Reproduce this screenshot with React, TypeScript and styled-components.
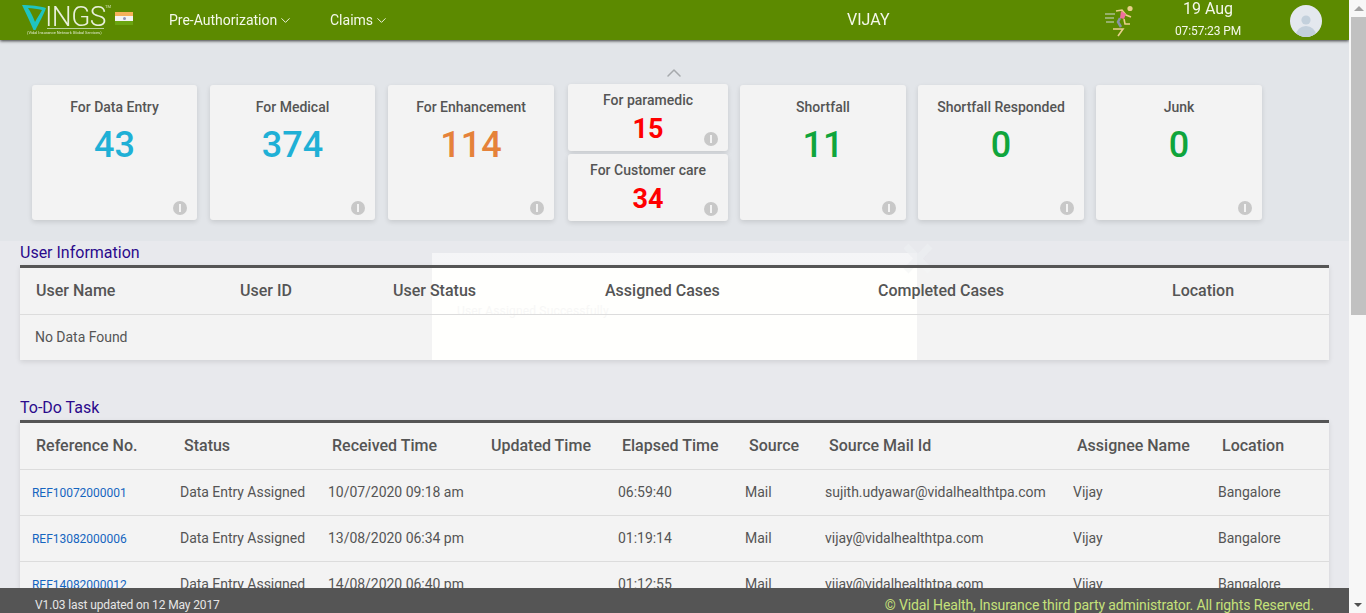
import React from "react";
import styled, { createGlobalStyle } from "styled-components";
import { ChevronDown, ChevronUp } from "lucide-react";

const Global = createGlobalStyle`
  html, body { margin: 0; padding: 0; height: 100%; overflow: hidden; background: #e8e9ed; font-family: Roboto, "Liberation Sans", sans-serif; color: #555; }
`;

const Shell = styled.div`
  position: relative;
  display: flex;
  height: 100vh;
`;

const Main = styled.main`
  flex: 1;
  min-width: 0;
  overflow-y: auto;
  scrollbar-width: none;
`;

const Page = styled.div`
  position: relative;
  padding-bottom: 40px;
`;

const Rail = styled.div`
  flex: none;
  width: 17px;
  background: #f7f7f7;
  display: flex;
  flex-direction: column;
`;

const RailButton = styled.div`
  height: 17px;
  flex: none;
  display: flex;
  align-items: center;
  justify-content: center;
`;

const RailUp = styled.span`
  border-left: 5px solid transparent;
  border-right: 5px solid transparent;
  border-bottom: 5px solid #a3a3a3;
  margin-left: 2px;
`;

const RailDown = styled.span`
  border-left: 4px solid transparent;
  border-right: 4px solid transparent;
  border-top: 4px solid #505050;
`;

const RailTrack = styled.div`
  flex: 1;
  padding-left: 2px;
`;

const RailThumb = styled.div`
  height: 298px;
  background: #c1c1c1;
`;

const Header = styled.header`
  position: sticky;
  top: 0;
  z-index: 5;
  height: 40px;
  background: #5c8a00;
  box-shadow: 0 1px 3px rgba(0, 0, 0, 0.75);
  display: flex;
  align-items: center;
  color: #f4f8ea;
`;

const LogoBox = styled.div`
  position: relative;
  width: 115px;
  height: 40px;
  flex: none;
`;

const LogoMark = styled.svg`
  position: absolute;
  left: 22px;
  top: 5px;
`;

const LogoWord = styled.span`
  position: absolute;
  left: 45px;
  top: 5px;
  font-size: 28px;
  font-weight: 300;
  line-height: 24px;
  letter-spacing: -0.6px;
  color: #e9f0dc;
`;

const LogoTm = styled.span`
  position: absolute;
  left: 105px;
  top: 4px;
  font-size: 4px;
  line-height: 5px;
  color: #cfe0b0;
`;

const LogoRule = styled.div`
  position: absolute;
  left: 47px;
  top: 28px;
  width: 57px;
  height: 1px;
  background: #b9d29a;
`;

const LogoTag = styled.span`
  position: absolute;
  left: 27px;
  top: 30px;
  font-size: 4px;
  line-height: 5px;
  white-space: nowrap;
  color: #dfe9cc;
`;

const Flag = styled.div`
  width: 18px;
  height: 13px;
  margin-top: -3px;
  flex: none;
  display: flex;
  flex-direction: column;
`;

const FlagBand = styled.div<{ $c: string }>`
  flex: 1;
  background: ${(p) => p.$c};
  display: flex;
  align-items: center;
  justify-content: center;
`;

const FlagDot = styled.div`
  width: 3px;
  height: 3px;
  border-radius: 50%;
  background: #8f93b8;
`;

const NavItem = styled.div<{ $w: number }>`
  width: ${(p) => p.$w}px;
  flex: none;
  font-size: 14px;
  display: flex;
  align-items: center;
  gap: 1px;
`;

const Nav = styled.nav`
  display: flex;
  margin-left: 36px;
`;

const UserName = styled.div`
  position: absolute;
  left: 847px;
  top: 10px;
  font-size: 16px;
  font-weight: 400;
  line-height: 20px;
`;

const Right = styled.div`
  margin-left: auto;
  display: flex;
  align-items: center;
  padding-right: 27px;
`;

const Runner = styled.svg`
  display: block;
  margin-top: 1px;
`;

const Clock = styled.div`
  width: 96px;
  margin-left: 24px;
  margin-right: 1px;
  height: 40px;
  display: flex;
  flex-direction: column;
  align-items: center;
`;

const ClockDate = styled.div`
  font-size: 16px;
  line-height: 18px;
`;

const ClockTime = styled.div`
  font-size: 12px;
  line-height: 14px;
  margin-top: 6px;
  letter-spacing: -0.1px;
`;

const Avatar = styled.svg`
  margin-left: 33px;
  display: block;
  margin-top: 1px;
`;

const Stats = styled.section`
  height: 172px;
  padding: 29px 0 0 32px;
  background: #e2e5e9;
  display: flex;
  align-items: flex-start;
  gap: 12px;
`;

const Card = styled.div<{ $w: number }>`
  position: relative;
  flex: none;
  width: ${(p) => p.$w}px;
  height: 135px;
  margin-top: 16px;
  box-sizing: border-box;
  padding-top: 14px;
  background: #f3f3f3;
  border-radius: 3px;
  box-shadow: 0 2px 5px rgba(0, 0, 0, 0.12);
  text-align: center;
  &:nth-child(-n + 3) {
    margin-right: 1px;
  }
`;

const CardTitle = styled.div`
  font-size: 14px;
  font-weight: 500;
  line-height: 16px;
  color: #555;
`;

const CardValue = styled.div<{ $c: string }>`
  font-size: 36px;
  font-weight: 500;
  line-height: 42px;
  margin-top: 9px;
  color: ${(p) => p.$c};
`;

const Stack = styled.div`
  flex: none;
  width: 160px;
  display: flex;
  flex-direction: column;
  margin-left: 1px;
`;

const Caret = styled.div`
  height: 15px;
  padding-left: 94px;
  color: #a6a9ac;
`;

const CaretIcon = styled(ChevronUp)`
  display: block;
  margin-top: -8px;
`;

const MiniCard = styled.div`
  position: relative;
  height: 67px;
  box-sizing: border-box;
  padding-top: 8px;
  background: #f3f3f3;
  border-radius: 3px;
  box-shadow: 0 2px 5px rgba(0, 0, 0, 0.12);
  text-align: center;
  & + & {
    margin-top: 3px;
  }
`;

const MiniValue = styled.div`
  font-size: 27px;
  font-weight: 700;
  line-height: 30px;
  margin-top: 6px;
  color: #f00;
`;

const Info = styled.span`
  position: absolute;
  right: 10px;
  bottom: 5px;
  width: 14px;
  height: 14px;
  border-radius: 50%;
  background: #c8c8c8;
  display: flex;
  align-items: center;
  justify-content: center;
  &::after {
    content: "";
    width: 2px;
    height: 8px;
    background: #f3f3f3;
  }
`;

const Toast = styled.div`
  position: absolute;
  left: 432px;
  top: 253px;
  width: 485px;
  height: 107px;
  box-sizing: border-box;
  padding: 50px 0 0 25px;
  background: linear-gradient(rgba(255, 255, 255, 0.55) 12px, #fff 12px);
  font-size: 12px;
  letter-spacing: 0.17px;
  line-height: 16px;
  color: #f0f0f2;
`;

const ToastClose = styled.svg`
  position: absolute;
  left: 471px;
  top: -10px;
`;

const Section = styled.section<{ $top: number }>`
  position: relative;
  z-index: 1;
  padding: 0 20px;
  margin-top: ${(p) => p.$top}px;
`;

const SectionTitle = styled.h2`
  margin: 0;
  font-size: 16px;
  font-weight: 400;
  line-height: 24px;
  color: #2b0a8c;
`;

const Table = styled.div`
  border-top: 3px solid #555;
  background: rgba(255, 254, 250, 0.47);
  box-shadow: 0 2px 5px rgba(0, 0, 0, 0.1);
`;

const Row = styled.div<{ $cols: string }>`
  display: grid;
  grid-template-columns: ${(p) => p.$cols};
  box-sizing: border-box;
  height: 46px;
  padding-bottom: 2px;
  align-items: center;
  border-bottom: 1px solid #dcdcdc;
  &:last-child {
    border-bottom: 0;
  }
`;

const HeadRow = styled(Row)`
  height: 47px;
`;

const EmptyRow = styled(Row)`
  height: 45px;
`;

const Head = styled.div`
  padding-left: 16px;
  font-size: 16px;
  font-weight: 500;
  color: #555;
  white-space: nowrap;
`;

const Cell = styled.div`
  padding-left: 12px;
  font-size: 14px;
  letter-spacing: -0.03px;
  color: #555;
  white-space: nowrap;
`;

const EmptyCell = styled(Cell)`
  padding-left: 15px;
`;

const RefLink = styled.a`
  font-size: 12px;
  color: #1565c0;
  text-decoration: none;
`;

const Footer = styled.footer`
  position: absolute;
  left: 0;
  right: 17px;
  bottom: 0;
  z-index: 5;
  height: 25px;
  box-sizing: border-box;
  padding: 0 35px;
  background: #555;
  display: flex;
  align-items: center;
  justify-content: space-between;
`;

const Version = styled.span`
  font-size: 12px;
  letter-spacing: -0.12px;
  margin-top: 8px;
  color: #e6e6e6;
`;

const Rights = styled.span`
  font-size: 14px;
  letter-spacing: -0.105px;
  margin-top: 8px;
  color: #c5e17a;
`;

const userCols = "204px 153px 212px 273px 294px 1fr";
const todoCols = "148px 148px 159px 131px 127px 80px 248px 145px 1fr";

const todoHeads = ["Reference No.", "Status", "Received Time", "Updated Time", "Elapsed Time", "Source", "Source Mail Id", "Assignee Name", "Location"];
const rows = [
  ["REF10072000001", "10/07/2020 09:18 am", "06:59:40", "sujith.udyawar@vidalhealthtpa.com"],
  ["REF13082000006", "13/08/2020 06:34 pm", "01:19:14", "vijay@vidalhealthtpa.com"],
  ["REF14082000012", "14/08/2020 06:40 pm", "01:12:55", "vijay@vidalhealthtpa.com"],
];

export default function App() {
  return (
    <Shell>
      <Global />
      <Main>
        <Page>
          <Header>
            <LogoBox>
              <LogoMark width="25" height="26" viewBox="0 0 25 26">
                <path
                  fillRule="evenodd"
                  d="M0 0 C8 0 18 1 24 3 C22 9 17 18 13.5 25 L11.5 25 C8 17 4 8 0 0 Z M6 3 C9 7 11 12 13 17 C15 13 18 9 20 5 C16 4 10 3 6 3 Z"
                  fill="#1fc4c0"
                />
              </LogoMark>
              <LogoWord>INGS</LogoWord>
              <LogoTm>TM</LogoTm>
              <LogoRule />
              <LogoTag>(Vidal Insurance Network Global Services)</LogoTag>
            </LogoBox>
            <Flag>
              <FlagBand $c="#f6b15a" />
              <FlagBand $c="#f4f4f4"><FlagDot /></FlagBand>
              <FlagBand $c="#6aa510" />
            </Flag>
            <Nav>
              <NavItem $w={161}>Pre-Authorization <ChevronDown size={15} strokeWidth={1.5} /></NavItem>
              <NavItem $w={70}>Claims <ChevronDown size={15} strokeWidth={1.5} /></NavItem>
            </Nav>
            <UserName>VIJAY</UserName>
            <Right>
              <Runner width="32" height="34" viewBox="0 0 32 34">
                <path d="M1 10h10M1 14h9M2 18h8" stroke="#96b06a" strokeWidth="2" fill="none" />
                <circle cx="26" cy="4.5" r="2.6" fill="#e8cf8a" />
                <path d="M12 7L18 6L22 11L27 13" stroke="#e8cf8a" strokeWidth="1.6" fill="none" />
                <path d="M17 7L22 10L20 15L16 14Z" fill="#ef6f9f" />
                <path d="M16 14L14 18L17 23" stroke="#8a93a8" strokeWidth="2.5" fill="none" />
                <path d="M20 15L21 20L26 20" stroke="#e8cf8a" strokeWidth="1.6" fill="none" />
                <path d="M9 25h10l-5 7" stroke="#e8cf8a" strokeWidth="1.6" fill="none" />
              </Runner>
              <Clock>
                <ClockDate>19 Aug</ClockDate>
                <ClockTime>07:57:23 PM</ClockTime>
              </Clock>
              <Avatar width="32" height="32" viewBox="0 0 32 32">
                <defs>
                  <clipPath id="av"><circle cx="16" cy="16" r="16" /></clipPath>
                </defs>
                <circle cx="16" cy="16" r="16" fill="#e4e8ee" />
                <circle cx="16" cy="15" r="4.6" fill="#c3d0dc" />
                <ellipse cx="16" cy="30" rx="10" ry="9" fill="#c3d0dc" clipPath="url(#av)" />
              </Avatar>
            </Right>
          </Header>

          <Stats>
            <Card $w={165}><CardTitle>For Data Entry</CardTitle><CardValue $c="#1fb0d6">43</CardValue><Info /></Card>
            <Card $w={165}><CardTitle>For Medical</CardTitle><CardValue $c="#1fb0d6">374</CardValue><Info /></Card>
            <Card $w={166}><CardTitle>For Enhancement</CardTitle><CardValue $c="#e5823a">114</CardValue><Info /></Card>
            <Stack>
              <Caret><CaretIcon size={24} strokeWidth={1.5} /></Caret>
              <MiniCard><CardTitle>For paramedic</CardTitle><MiniValue>15</MiniValue><Info /></MiniCard>
              <MiniCard><CardTitle>For Customer care</CardTitle><MiniValue>34</MiniValue><Info /></MiniCard>
            </Stack>
            <Card $w={166}><CardTitle>Shortfall</CardTitle><CardValue $c="#0fa53c">11</CardValue><Info /></Card>
            <Card $w={166}><CardTitle>Shortfall Responded</CardTitle><CardValue $c="#0fa53c">0</CardValue><Info /></Card>
            <Card $w={166}><CardTitle>Junk</CardTitle><CardValue $c="#0fa53c">0</CardValue><Info /></Card>
          </Stats>

          <Toast>
            User Assigned Successfully
            <ToastClose width="30" height="31" viewBox="0 0 30 31">
              <path d="M3 3L27 28M27 3L3 28" stroke="rgba(236,238,241,0.7)" strokeWidth="7" fill="none" />
            </ToastClose>
          </Toast>

          <Section $top={0}>
            <SectionTitle>User Information</SectionTitle>
            <Table>
              <HeadRow $cols={userCols}>
                {["User Name", "User ID", "User Status", "Assigned Cases", "Completed Cases", "Location"].map((h) => <Head key={h}>{h}</Head>)}
              </HeadRow>
              <EmptyRow $cols="1fr"><EmptyCell>No Data Found</EmptyCell></EmptyRow>
            </Table>
          </Section>

          <Section $top={36}>
            <SectionTitle>To-Do Task</SectionTitle>
            <Table>
              <HeadRow $cols={todoCols}>
                {todoHeads.map((h) => <Head key={h}>{h}</Head>)}
              </HeadRow>
              {rows.map((r) => (
                <Row key={r[0]} $cols={todoCols}>
                  <Cell><RefLink>{r[0]}</RefLink></Cell>
                  <Cell>Data Entry Assigned</Cell>
                  <Cell>{r[1]}</Cell>
                  <Cell />
                  <Cell>{r[2]}</Cell>
                  <Cell>Mail</Cell>
                  <Cell>{r[3]}</Cell>
                  <Cell>Vijay</Cell>
                  <Cell>Bangalore</Cell>
                </Row>
              ))}
            </Table>
          </Section>
        </Page>
      </Main>
      <Rail>
        <RailButton><RailUp /></RailButton>
        <RailTrack><RailThumb /></RailTrack>
        <RailButton><RailDown /></RailButton>
      </Rail>
      <Footer>
        <Version>V1.03 last updated on 12 May 2017</Version>
        <Rights>© Vidal Health, Insurance third party administrator. All rights Reserved.</Rights>
      </Footer>
    </Shell>
  );
}
